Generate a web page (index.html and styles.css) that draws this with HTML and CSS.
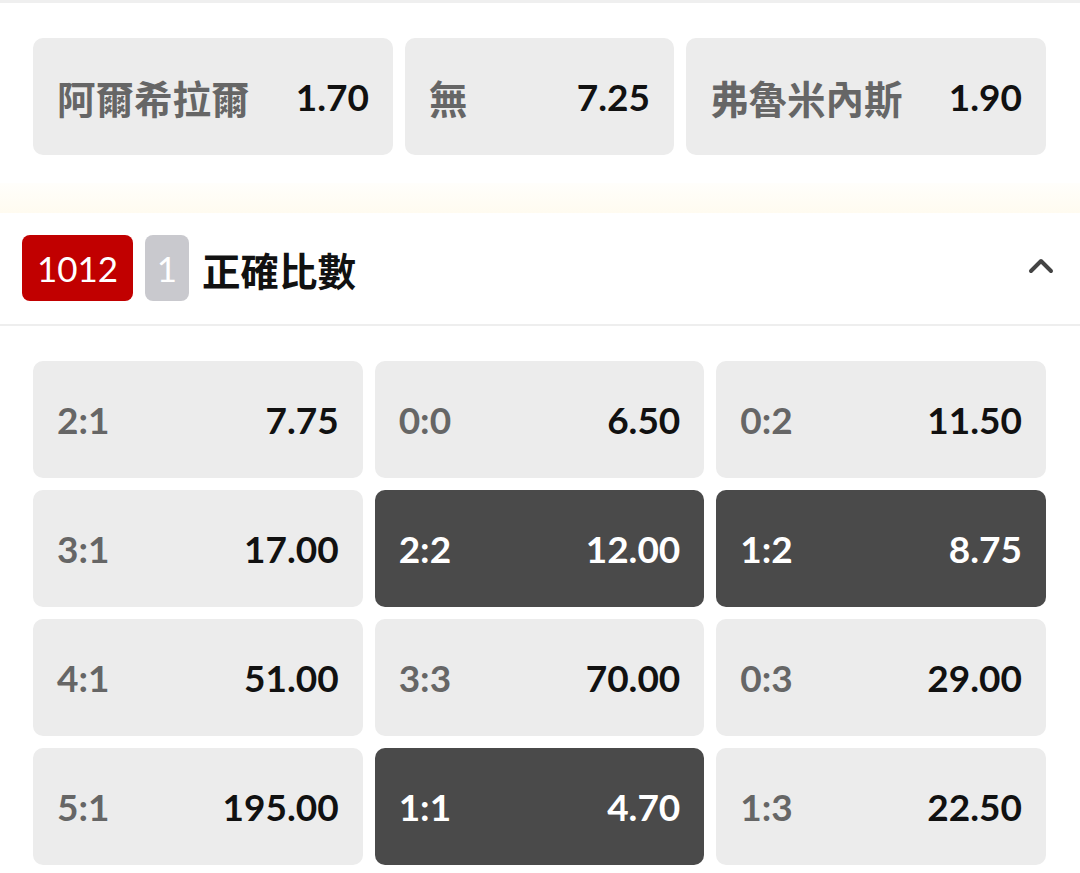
FILE: index.html
```html
<!DOCTYPE html>
<html lang="zh-Hant">
<head>
    <meta charset="UTF-8">
    <meta name="viewport" content="width=device-width, initial-scale=1.0">
    <title>正確比數</title>
    <link rel="stylesheet" href="styles.css">
</head>
<body>
    <div class="linha-topo"></div>

    <!-- Mercado 1X2 -->
    <div class="mercado-topo">
        <div class="opcao"><span class="nome">阿爾希拉爾</span><span class="odd">1.70</span></div>
        <div class="opcao"><span class="nome">無</span><span class="odd">7.25</span></div>
        <div class="opcao"><span class="nome">弗魯米內斯</span><span class="odd">1.90</span></div>
    </div>

    <div class="faixa"></div>

    <!-- Cabeçalho do mercado -->
    <div class="cabecalho">
        <span class="etiqueta vermelha">1012</span>
        <span class="etiqueta cinza">1</span>
        <h2 class="titulo">正確比數</h2>
        <svg class="seta" width="26" height="18" viewBox="0 0 26 18">
            <path d="M3 15 L13 5 L23 15" fill="none" stroke="#444" stroke-width="4" stroke-linecap="round" stroke-linejoin="round"/>
        </svg>
    </div>

    <!-- Grade de placares -->
    <div class="grade">
        <div class="opcao"><span class="nome">2:1</span><span class="odd">7.75</span></div>
        <div class="opcao"><span class="nome">0:0</span><span class="odd">6.50</span></div>
        <div class="opcao"><span class="nome">0:2</span><span class="odd">11.50</span></div>

        <div class="opcao"><span class="nome">3:1</span><span class="odd">17.00</span></div>
        <div class="opcao ativa"><span class="nome">2:2</span><span class="odd">12.00</span></div>
        <div class="opcao ativa"><span class="nome">1:2</span><span class="odd">8.75</span></div>

        <div class="opcao"><span class="nome">4:1</span><span class="odd">51.00</span></div>
        <div class="opcao"><span class="nome">3:3</span><span class="odd">70.00</span></div>
        <div class="opcao"><span class="nome">0:3</span><span class="odd">29.00</span></div>

        <div class="opcao"><span class="nome">5:1</span><span class="odd">195.00</span></div>
        <div class="opcao ativa"><span class="nome">1:1</span><span class="odd">4.70</span></div>
        <div class="opcao"><span class="nome">1:3</span><span class="odd">22.50</span></div>
    </div>
</body>
</html>
```

FILE: styles.css
```css
* {
    margin: 0;
    padding: 0;
    box-sizing: border-box;
}

body {
    font-family: 'Lato', 'Noto Sans CJK TC', sans-serif;
    background-color: #fff;
    color: #111;
    width: 1080px;
    height: 873px;
    overflow: hidden;
}

.linha-topo {
    height: 3px;
    background-color: #efefef;
}

/* Linha 1X2 */
.mercado-topo {
    display: grid;
    grid-template-columns: 360fr 269fr 360fr;
    gap: 12px;
    padding: 35px 34px 0 33px;
}

.opcao {
    display: flex;
    align-items: center;
    justify-content: space-between;
    height: 117px;
    padding: 0 24px;
    background-color: #ececec;
    border-radius: 10px;
}

.nome {
    font-size: 37px;
    font-weight: 700;
    color: #666;
}

.mercado-topo .nome {
    font-size: 38.5px;
}

.odd {
    font-size: 37px;
    font-weight: 700;
    color: #111;
}

.faixa {
    height: 30px;
    margin-top: 28px;
    background: linear-gradient(#fffefb, #fffbf0);
}

/* Cabeçalho */
.cabecalho {
    display: flex;
    align-items: center;
    height: 113px;
    padding: 0 26px 0 22px;
    border-bottom: 2px solid #eeeeee;
}

.etiqueta {
    display: flex;
    align-items: center;
    justify-content: center;
    height: 66px;
    margin-top: -2px;
    border-radius: 8px;
    color: #fff;
    font-size: 35px;
    font-weight: 400;
}

.vermelha {
    width: 111px;
    background-color: #c10000;
}

.cinza {
    width: 44px;
    margin-left: 12px;
    background-color: #c9c9ce;
}

.titulo {
    margin-left: 13px;
    font-size: 38.5px;
    font-weight: 700;
    color: #111;
    flex: 1;
}

.seta {
    display: block;
    margin-top: -8px;
}

/* Grade */
.grade {
    display: grid;
    grid-template-columns: repeat(3, 1fr);
    gap: 12px;
    padding: 35px 34px 0 33px;
}

.opcao.ativa {
    background-color: #4a4a4a;
}

.opcao.ativa .nome,
.opcao.ativa .odd {
    color: #fff;
}
```
